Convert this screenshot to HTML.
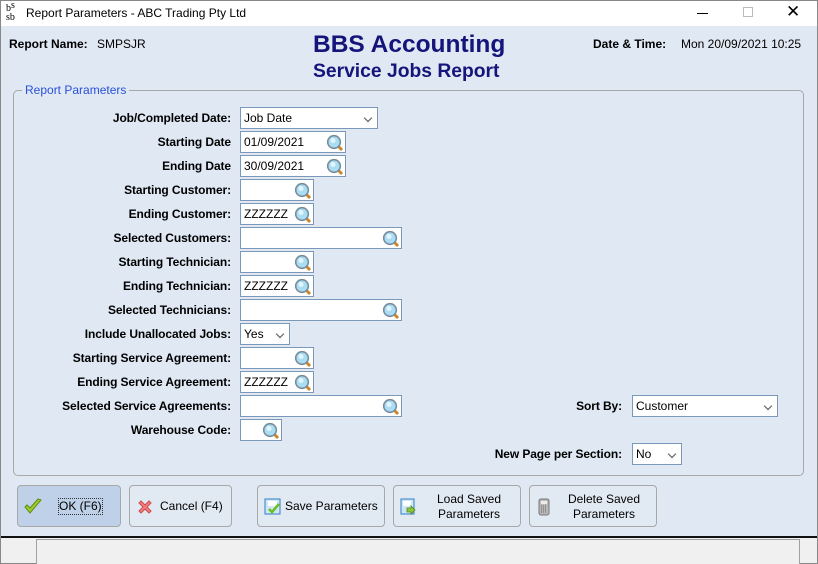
<!DOCTYPE html>
<html><head><meta charset="utf-8"><style>
*{box-sizing:border-box;margin:0;padding:0}
body{width:818px;height:564px;position:relative;overflow:hidden;font-family:"Liberation Sans",Arial,sans-serif;font-size:12px;color:#000;background:#f0f0f0}
.a{position:absolute}
.lbl{position:absolute;right:587px;font-weight:bold;white-space:nowrap;line-height:14px;letter-spacing:-0.1px}
.box{position:absolute;left:240px;height:22px;background:#fff;border:1px solid #7a99b8;padding-left:3px;line-height:20px;font-size:12px}
.mag{position:absolute;right:1px;top:2px;width:18px;height:18px}
.chev{position:absolute;right:6px;top:7px;width:6px;height:6px;border-right:1px solid #555;border-bottom:1px solid #555;transform:rotate(45deg)}
.btn{position:absolute;top:485px;height:42px;border:1px solid #a8a8a8;border-radius:4px;background:#e1e9f3;font-size:12px;text-align:center;line-height:15px}
</style></head><body>
<div class="a" style="left:0;top:0;width:818px;height:564px;border:1px solid #888;"></div>
<div class="a" style="left:1px;top:1px;width:816px;height:25px;background:#fff"></div>
<div class="a" style="left:6px;top:4px;font-size:10px;line-height:9px;font-family:'Liberation Serif',serif">b<span style="position:relative;top:-3px">s</span><br>s<span>b</span></div>
<div class="a" style="left:26px;top:6px;font-size:12px">Report Parameters - ABC Trading Pty Ltd</div>
<div class="a" style="left:697px;top:13px;width:11px;height:1px;background:#000"></div>
<div class="a" style="left:743px;top:7px;width:10px;height:10px;border:1px solid #bbb"></div>
<div class="a" style="left:786px;top:2px;font-size:17px;font-weight:300">✕</div>
<div class="a" style="left:1px;top:26px;width:816px;height:511px;background:#dfe8f3"></div>
<div class="a" style="left:9px;top:37px;font-weight:bold">Report Name:</div>
<div class="a" style="left:97px;top:37px">SMPSJR</div>
<div class="a" style="left:313px;top:31px;font-size:24.5px;font-weight:bold;color:#14147a">BBS Accounting</div>
<div class="a" style="left:313px;top:61px;font-size:19.3px;font-weight:bold;color:#14147a">Service Jobs Report</div>
<div class="a" style="left:593px;top:37px;font-weight:bold">Date &amp; Time:</div>
<div class="a" style="left:681px;top:37px">Mon 20/09/2021 10:25</div>
<div class="a" style="left:13px;top:90px;width:791px;height:386px;border:1px solid #a8a8a8;border-radius:5px"></div>
<div class="a" style="left:22px;top:83px;padding:0 3px;background:#dfe8f3;color:#2a50d8;font-size:12px">Report Parameters</div>

<svg width="0" height="0" style="position:absolute"><defs><symbol id="m" viewBox="0 0 18 18"><line x1="11" y1="11" x2="16" y2="16" stroke="#c8872a" stroke-width="3"/><circle cx="8" cy="8" r="6.3" fill="#a9dcf5" stroke="#7a8c99" stroke-width="1.6"/><circle cx="7" cy="6.5" r="2.5" fill="#e4f5fd"/></symbol></defs></svg>

<div class="lbl" style="top:111px">Job/Completed Date:</div>
<div class="box" style="top:107px;width:138px">Job Date<div class="chev"></div></div>
<div class="lbl" style="top:135px">Starting Date</div>
<div class="box" style="top:131px;width:106px">01/09/2021<svg class="mag"><use href="#m"/></svg></div>
<div class="lbl" style="top:159px">Ending Date</div>
<div class="box" style="top:155px;width:106px">30/09/2021<svg class="mag"><use href="#m"/></svg></div>
<div class="lbl" style="top:183px">Starting Customer:</div>
<div class="box" style="top:179px;width:74px"><svg class="mag"><use href="#m"/></svg></div>
<div class="lbl" style="top:207px">Ending Customer:</div>
<div class="box" style="top:203px;width:74px">ZZZZZZ<svg class="mag"><use href="#m"/></svg></div>
<div class="lbl" style="top:231px">Selected Customers:</div>
<div class="box" style="top:227px;width:162px"><svg class="mag"><use href="#m"/></svg></div>
<div class="lbl" style="top:255px">Starting Technician:</div>
<div class="box" style="top:251px;width:74px"><svg class="mag"><use href="#m"/></svg></div>
<div class="lbl" style="top:279px">Ending Technician:</div>
<div class="box" style="top:275px;width:74px">ZZZZZZ<svg class="mag"><use href="#m"/></svg></div>
<div class="lbl" style="top:303px">Selected Technicians:</div>
<div class="box" style="top:299px;width:162px"><svg class="mag"><use href="#m"/></svg></div>
<div class="lbl" style="top:327px">Include Unallocated Jobs:</div>
<div class="box" style="top:323px;width:50px">Yes<div class="chev"></div></div>
<div class="lbl" style="top:351px">Starting Service Agreement:</div>
<div class="box" style="top:347px;width:74px"><svg class="mag"><use href="#m"/></svg></div>
<div class="lbl" style="top:375px">Ending Service Agreement:</div>
<div class="box" style="top:371px;width:74px">ZZZZZZ<svg class="mag"><use href="#m"/></svg></div>
<div class="lbl" style="top:399px">Selected Service Agreements:</div>
<div class="box" style="top:395px;width:162px"><svg class="mag"><use href="#m"/></svg></div>
<div class="lbl" style="top:423px">Warehouse Code:</div>
<div class="box" style="top:419px;width:42px"><svg class="mag"><use href="#m"/></svg></div>

<div class="lbl" style="top:399px;right:196px">Sort By:</div>
<div class="box" style="top:395px;left:632px;width:146px">Customer<div class="chev"></div></div>
<div class="lbl" style="top:447px;right:196px">New Page per Section:</div>
<div class="box" style="top:443px;left:632px;width:50px">No<div class="chev"></div></div>

<div class="btn" style="left:17px;width:104px;background:#bfd1e8">
<svg class="a" style="left:6px;top:12px" width="18" height="17" viewBox="0 0 18 17"><path d="M1 9 L6 15 L17 2 L14 1 L6 10 L3 7 Z" fill="#9ccf2a" stroke="#5f8a12" stroke-width="1"/></svg>
<span class="a" style="left:41px;top:13px;outline:1px dotted #333">OK (F6)</span></div>
<div class="btn" style="left:129px;width:103px">
<svg class="a" style="left:7px;top:13px" width="16" height="16" viewBox="0 0 16 16"><path d="M2 4 L4 2 L8 6 L12 2 L14 4 L10 8 L14 12 L12 14 L8 10 L4 14 L2 12 L6 8Z" fill="#f08080" stroke="#d04a4a"/></svg>
<span class="a" style="left:30px;top:13px">Cancel (F4)</span></div>
<div class="btn" style="left:257px;width:128px">
<svg class="a" style="left:6px;top:12px" width="17" height="17" viewBox="0 0 17 17"><rect x="1" y="1" width="15" height="15" fill="#cfe6f7" stroke="#2f7fc0"/><rect x="4" y="3" width="9" height="5" fill="#fff"/><path d="M5 11 L8 14 L15 6" stroke="#6cbf1f" stroke-width="2.5" fill="none"/></svg>
<span class="a" style="left:27px;top:13px">Save Parameters</span></div>
<div class="btn" style="left:393px;width:128px">
<svg class="a" style="left:6px;top:12px" width="17" height="17" viewBox="0 0 17 17"><rect x="1" y="1" width="13" height="15" fill="#cfe6f7" stroke="#2f7fc0"/><rect x="3" y="3" width="8" height="5" fill="#fff"/><path d="M7 10 H11 V8 L15 12 L11 16 V14 H7Z" fill="#8cc63f" stroke="#4f8a10" stroke-width=".8"/></svg>
<span class="a" style="left:30px;top:6px;width:90px">Load Saved<br>Parameters</span></div>
<div class="btn" style="left:529px;width:128px">
<svg class="a" style="left:8px;top:12px" width="12" height="18" viewBox="0 0 12 18"><rect x="1" y="1" width="10" height="16" rx="2" fill="#b8b8b8" stroke="#777"/><rect x="3" y="3" width="6" height="3" fill="#eee"/><path d="M3 8h6M3 10h6M3 12h6M3 14h6" stroke="#666" stroke-dasharray="1 1"/></svg>
<span class="a" style="left:24px;top:6px;width:100px">Delete Saved<br>Parameters</span></div>

<div class="a" style="left:1px;top:536px;width:816px;height:2px;background:#111"></div>
<div class="a" style="left:36px;top:539px;width:764px;height:25px;border:1px solid #a0a0a0;border-bottom:none;background:#f0f0f0"></div>
</body></html>
